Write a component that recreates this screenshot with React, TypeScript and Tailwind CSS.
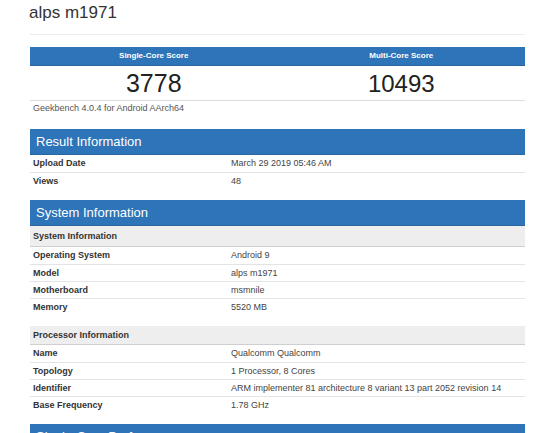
import React from "react";

type RowData = [string, string];

function Row({ label, value, first }: { label: string; value: string; first?: boolean }) {
  return (
    <div
      className={
        "flex h-[17px] items-center text-[9px] leading-none " +
        (first ? "" : "border-t border-[#e4e4e4]")
      }
    >
      <div className="w-[40%] pl-[3px] font-bold text-[#333]">{label}</div>
      <div className="flex-1 pl-[3px] text-[#444] whitespace-nowrap">{value}</div>
    </div>
  );
}

function Header({ title }: { title: string }) {
  return (
    <div className="flex h-[26px] items-center bg-[#2e74b8] border-b border-[#29659f] pl-[6px] text-[13px] text-white leading-none">
      {title}
    </div>
  );
}

function SubHeader({ title, h }: { title: string; h: string }) {
  return (
    <div
      className={
        "flex items-center bg-[#eeeeee] border-b border-[#cfcfcf] pl-[3px] text-[9px] font-bold text-[#333] leading-none " +
        h
      }
    >
      {title}
    </div>
  );
}

function Rows({ rows }: { rows: RowData[] }) {
  return (
    <div>
      {rows.map(([l, v], i) => (
        <Row key={l} label={l} value={v} first={i === 0} />
      ))}
    </div>
  );
}

export default function App() {
  return (
    <div className="w-[550px] h-[433px] overflow-hidden bg-white font-['Liberation_Sans',Arial,sans-serif]">
      <div className="pl-[29px] pt-[3px] text-[17px] leading-[20px] text-[#333]">alps m1971</div>

      <div className="ml-[30px] w-[495px]">
        {/* Score panel */}
        <div className="mt-[11px] border-t border-[#ececec] pt-[12px]">
          <div className="grid grid-cols-2 h-[19px] bg-[#2e74b8] border-b border-[#29659f] text-[8px] font-bold text-white">
            <div className="flex items-center justify-center">Single-Core Score</div>
            <div className="flex items-center justify-center">Multi-Core Score</div>
          </div>
          <div className="grid grid-cols-2 h-[35px] border-b border-[#dcdcdc] text-[#222]">
            <div className="flex items-center justify-center text-[25px] leading-[35px]">3778</div>
            <div className="flex items-center justify-center text-[24px] leading-[35px]">10493</div>
          </div>
          <div className="h-[16px] flex items-center pl-[3px] text-[9px] text-[#555]">
            Geekbench 4.0.4 for Android AArch64
          </div>
        </div>

        {/* Result Information */}
        <div className="mt-[12px]">
          <Header title="Result Information" />
          <Rows
            rows={[
              ["Upload Date", "March 29 2019 05:46 AM"],
              ["Views", "48"],
            ]}
          />
        </div>

        {/* System Information */}
        <div className="mt-[11px]">
          <Header title="System Information" />
          <SubHeader title="System Information" h="h-[21px]" />
          <Rows
            rows={[
              ["Operating System", "Android 9"],
              ["Model", "alps m1971"],
              ["Motherboard", "msmnile"],
              ["Memory", "5520 MB"],
            ]}
          />
          <div className="mt-[11px]">
            <SubHeader title="Processor Information" h="h-[19px]" />
            <Rows
              rows={[
                ["Name", "Qualcomm Qualcomm"],
                ["Topology", "1 Processor, 8 Cores"],
                ["Identifier", "ARM implementer 81 architecture 8 variant 13 part 2052 revision 14"],
                ["Base Frequency", "1.78 GHz"],
              ]}
            />
          </div>
        </div>

        <div className="mt-[11px]">
          <Header title="Single-Core Performance" />
        </div>
      </div>
    </div>
  );
}
